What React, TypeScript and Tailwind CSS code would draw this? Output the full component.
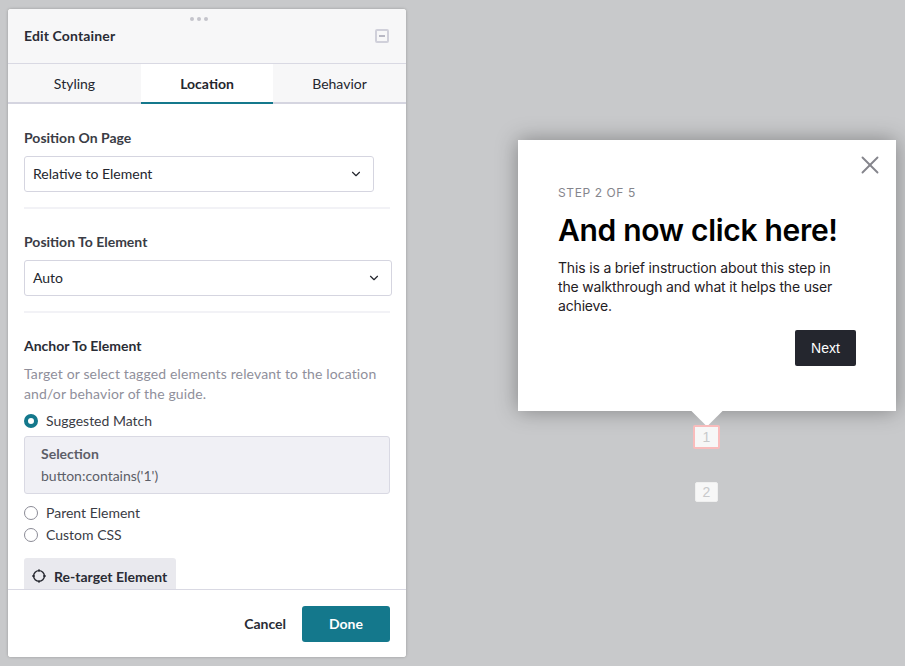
import React from 'react';
import { ChevronDown, X } from 'lucide-react';

const panelFont = "font-['Lato','Noto_Sans',sans-serif]";

const Select = ({ value, className }: { value: string; className: string }) => (
  <div className={`flex h-9 items-center justify-between rounded-[3px] border border-[#d5d5e0] bg-white pl-2 pr-[10px] text-[14px] text-[#24262e] ${className}`}>
    <span className="pb-[2px]">{value}</span>
    <ChevronDown className="h-[14px] w-[14px] text-[#24262e]" strokeWidth={2} />
  </div>
);

const Radio = ({ label, checked }: { label: string; checked?: boolean }) => (
  <div className="flex h-[22px] items-center gap-2 text-[14px] text-[#3a3c45]">
    {checked ? (
      <span className="mt-[1px] h-[14px] w-[14px] rounded-full border-[4px] border-[#14788c] bg-white" />
    ) : (
      <span className="mt-[1px] h-[14px] w-[14px] rounded-full border border-[#8b8b96] bg-white" />
    )}
    <span>{label}</span>
  </div>
);

const TargetIcon = () => (
  <svg width="14" height="14" viewBox="0 0 14 14" fill="none" stroke="#24262e" strokeWidth="1.4">
    <circle cx="7" cy="7" r="5.4" />
    <path d="M7 .2v2.6M7 11.2v2.6M.2 7h2.6M11.2 7h2.6" strokeWidth="1.3" />
  </svg>
);

const App = () => {
  return (
    <div className="flex h-[666px] w-[905px] items-start overflow-hidden bg-[#c8c9cb]">
      {/* Editor panel */}
      <div className={`ml-2 mt-[9px] flex h-[648px] w-[398px] shrink-0 flex-col overflow-hidden rounded-[3px] bg-white shadow-[0_0_3px_rgba(0,0,0,0.25)] ${panelFont}`}>
        <div className="relative flex h-[55px] shrink-0 items-center justify-between border-b border-[#d9d9e3] bg-[#f7f7f8] pl-4 pr-[17px]">
          <div className="absolute left-[182px] top-[8px] flex gap-[3px]">
            <span className="h-[4px] w-[4px] rounded-full bg-[#c4c4cc]" />
            <span className="h-[4px] w-[4px] rounded-full bg-[#c4c4cc]" />
            <span className="h-[4px] w-[4px] rounded-full bg-[#c4c4cc]" />
          </div>
          <span className="pb-[2px] text-[14px] font-bold tracking-[0.01em] text-[#2a2c35]">Edit Container</span>
          <span className="flex h-[14px] w-[14px] items-center justify-center rounded-[2px] border-2 border-[#d0d0da]">
            <span className="h-[2px] w-[6px] bg-[#b8b8c4]" />
          </span>
        </div>

        <div className="flex h-10 shrink-0 text-[14px] text-[#24262e]">
          <div className="flex w-[133px] items-center justify-center border-b-2 border-[#d5d5e0] bg-[#f7f7f8]">Styling</div>
          <div className="flex w-[132px] items-center justify-center border-b-2 border-[#14788c] bg-white font-bold">Location</div>
          <div className="flex flex-1 items-center justify-center border-b-2 border-[#d5d5e0] bg-[#f7f7f8]">Behavior</div>
        </div>

        <div className="min-h-0 flex-1 overflow-hidden px-4 pt-[25px]">
          <div className="text-[14px] font-bold leading-[18px] text-[#3a3c45]">Position On Page</div>
          <Select value="Relative to Element" className="mt-[9px] w-[350px]" />
          <div className="mt-[15px] h-[2px] bg-[#f2f2f6]" />

          <div className="mt-[24px] text-[14px] font-bold leading-[18px] text-[#3a3c45]">Position To Element</div>
          <Select value="Auto" className="mt-[9px] w-[368px]" />
          <div className="mt-[15px] h-[2px] w-[366px] bg-[#f2f2f6]" />

          <div className="mt-[24px] text-[14px] font-bold leading-[18px] text-[#2a2c35]">Anchor To Element</div>
          <p className="mt-[9px] w-[366px] text-[14px] leading-5 tracking-[0.01em] text-[#8f8f9b]">
            Target or select tagged elements relevant to the location and/or behavior of the guide.
          </p>
          <div className="mt-[5px]">
            <Radio label="Suggested Match" checked />
          </div>
          <div className="mt-[5px] h-[58px] w-[366px] rounded-[3px] border border-[#d9d9e3] bg-[#f0f0f5] px-4 pt-[7px] text-[14px] text-[#5c5e68]">
            <div className="font-bold leading-5">Selection</div>
            <div className="mt-[2px] leading-5">button:contains('1')</div>
          </div>
          <div className="mt-[7px]">
            <Radio label="Parent Element" />
            <Radio label="Custom CSS" />
          </div>
          <div className="mt-[13px] flex h-9 w-[152px] items-center gap-2 rounded-[3px] bg-[#e9e9ee] pl-2 text-[14px] font-bold text-[#2a2c35]">
            <TargetIcon />
            <span>Re-target Element</span>
          </div>
        </div>

        <div className="flex h-[68px] shrink-0 items-center justify-end gap-4 border-t border-[#d9d9e3] bg-white pr-4 text-[14px] font-bold">
          <span className="text-[#2a2c35]">Cancel</span>
          <span className="flex h-9 w-[88px] items-center justify-center rounded-[3px] bg-[#14788c] text-white">Done</span>
        </div>
      </div>

      {/* Walkthrough preview */}
      <div className="ml-[112px] mt-[140px] flex w-[378px] shrink-0 flex-col items-center font-['Inter',sans-serif]">
        <div className="relative z-10 h-[271px] w-[378px] bg-white pl-10 pr-10 pt-[45px] shadow-[0_0_20px_rgba(0,0,0,0.35)]">
          <X className="absolute right-[11px] top-[10px] h-[30px] w-[30px] text-[#85858c]" strokeWidth={1.5} absoluteStrokeWidth />
          <div className="text-[12px] leading-[16px] tracking-[0.05em] text-[#85858c]">STEP 2 OF 5</div>
          <h1 className="mt-[10px] whitespace-nowrap text-[30px] font-semibold leading-[38px] tracking-[-0.01em] text-black">And now click here!</h1>
          <p className="mt-[9px] w-[290px] text-[14px] leading-[19px] tracking-[-0.012em] text-[#1f2024]">
            This is a brief instruction about this step in the walkthrough and what it helps the user achieve.
          </p>
          <div className="mt-[15px] flex justify-end">
            <span className="flex h-9 w-[61px] items-center justify-center rounded-[2px] bg-[#24262e] font-['Liberation_Sans',sans-serif] text-[14px] text-white">Next</span>
          </div>
          <div className="absolute left-[178px] top-[260px] h-[22px] w-[22px] rotate-45 bg-white" />
        </div>
        <div className="relative z-20 mt-[14px] flex w-[378px] flex-col items-center font-['Liberation_Sans',sans-serif] text-[14px] text-[#c8c9cb]">
          <span className="-ml-[1px] flex h-[24px] w-[27px] items-center justify-center rounded-[2px] border-2 border-[#f9bcbc] bg-[#f7f7f7]">1</span>
          <span className="-ml-[1px] mt-[33px] flex h-[20px] w-[23px] items-center justify-center rounded-[2px] border border-[#efefef] bg-[#f7f7f7]">2</span>
        </div>
      </div>
    </div>
  );
};

export default App;
